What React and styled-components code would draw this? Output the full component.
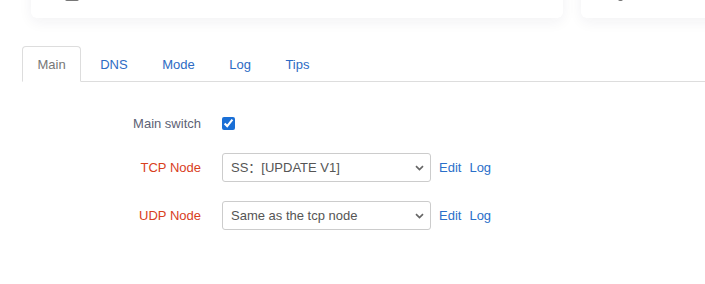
import React, { useState } from 'react';
import styled, { createGlobalStyle } from 'styled-components';

const GlobalStyle = createGlobalStyle`
  html, body {
    margin: 0;
    padding: 0;
    background: #fff;
    font-family: "Liberation Sans", Arial, sans-serif;
    font-size: 13px;
  }
  * { box-sizing: border-box; }
`;

const Page = styled.div`
  width: 705px;
  height: 284px;
  overflow: hidden;
`;

const CardRow = styled.div`
  display: flex;
  gap: 18px;
  margin: -40px 0 0 31px;
`;

const Card = styled.div`
  flex: 0 0 ${(p) => p.$width}px;
  height: 58px;
  background: #fff;
  border-radius: 6px;
  box-shadow: 0 4px 14px rgba(30, 40, 70, 0.06);
  padding: 27px 0 0 ${(p) => p.$inset}px;
`;

const CardGlyph = styled.div`
  width: ${(p) => p.$w}px;
  height: 14px;
  background: #777;
  border-radius: 2px;
`;

const Tabs = styled.ul`
  display: flex;
  list-style: none;
  margin: 28px 0 0 22px;
  padding: 0;
  border-bottom: 1px solid #ddd;
  height: 36px;
`;

const Tab = styled.li`
  height: 36px;
  margin-right: 4px;
  padding: 0 14px 0 14.5px;
  display: flex;
  align-items: center;
  border: 1px solid ${(p) => (p.$active ? '#ddd' : 'transparent')};
  border-bottom-color: ${(p) => (p.$active ? '#fff' : 'transparent')};
  border-radius: 4px 4px 0 0;
  background: ${(p) => (p.$active ? '#fff' : 'transparent')};
  color: ${(p) => (p.$active ? '#777' : '#2d6bc4')};
  cursor: pointer;
`;

const Form = styled.div`
  padding-top: 22px;
`;

const Row = styled.div`
  display: grid;
  grid-template-columns: 201px auto;
  column-gap: 21px;
  align-items: center;
  padding: 9px 0 10px;
  min-height: ${(p) => (p.$short ? 40 : 48)}px;
`;

const Label = styled.label`
  text-align: right;
  color: ${(p) => (p.$warn ? '#d9401d' : '#5d6275')};
`;

const Controls = styled.div`
  display: flex;
  align-items: center;
`;

const Check = styled.input`
  width: 13px;
  height: 13px;
  margin: 0;
  accent-color: #1a6fd6;
`;

const SelectWrap = styled.div`
  position: relative;
  width: 209px;
  height: 29px;
`;

const Select = styled.select`
  appearance: none;
  width: 100%;
  height: 100%;
  border: 1px solid #ccc;
  border-radius: 3px;
  background: #fff;
  color: #555;
  font-family: "Liberation Sans", Arial, "Noto Sans CJK SC", sans-serif;
  font-size: 13px;
  padding: 0 24px 0 8px;
  outline: none;
`;

const Chevron = styled.svg`
  position: absolute;
  right: 7px;
  top: 12px;
  pointer-events: none;
`;

const Link = styled.a`
  margin-left: 8px;
  color: #2a6fc9;
  text-decoration: none;
  cursor: pointer;
`;

function NodeSelect({ value, options }) {
  return (
    <SelectWrap>
      <Select defaultValue={value}>
        {options.map((o) => (
          <option key={o}>{o}</option>
        ))}
      </Select>
      <Chevron width="9" height="6" viewBox="0 0 9 6">
        <path d="M1 1.2l3.5 3.3 3.5-3.3" fill="none" stroke="#666" strokeWidth="1.7" />
      </Chevron>
    </SelectWrap>
  );
}

export default function App() {
  const [tab, setTab] = useState('Main');
  const [enabled, setEnabled] = useState(true);
  const tabs = ['Main', 'DNS', 'Mode', 'Log', 'Tips'];

  return (
    <Page>
      <GlobalStyle />
      <CardRow>
        <Card $width={532} $inset={34}>
          <CardGlyph $w={14} />
        </Card>
        <Card $width={200} $inset={37}>
          <CardGlyph $w={5} />
        </Card>
      </CardRow>

      <Tabs>
        {tabs.map((t) => (
          <Tab key={t} $active={t === tab} onClick={() => setTab(t)}>
            {t}
          </Tab>
        ))}
      </Tabs>

      <Form>
        <Row $short>
          <Label>Main switch</Label>
          <Controls>
            <Check
              type="checkbox"
              checked={enabled}
              onChange={() => setEnabled(!enabled)}
            />
          </Controls>
        </Row>
        <Row>
          <Label $warn>TCP Node</Label>
          <Controls>
            <NodeSelect
              value="SS：[UPDATE V1]"
              options={['SS：[UPDATE V1]', 'Close']}
            />
            <Link>Edit</Link>
            <Link>Log</Link>
          </Controls>
        </Row>
        <Row>
          <Label $warn>UDP Node</Label>
          <Controls>
            <NodeSelect
              value="Same as the tcp node"
              options={['Same as the tcp node', 'Close']}
            />
            <Link>Edit</Link>
            <Link>Log</Link>
          </Controls>
        </Row>
      </Form>
    </Page>
  );
}
